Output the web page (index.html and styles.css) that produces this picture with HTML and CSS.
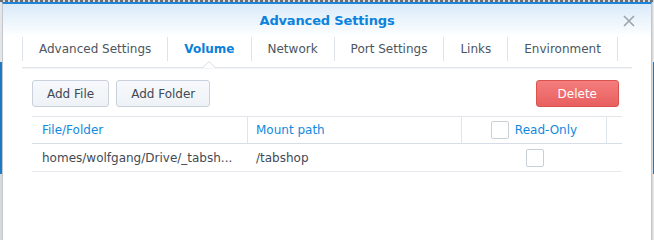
FILE: index.html
```html
<!DOCTYPE html>
<html lang="en">
<head>
    <meta charset="UTF-8">
    <meta name="viewport" content="width=device-width, initial-scale=1.0">
    <title>Advanced Settings</title>
    <link rel="stylesheet" href="styles.css">
</head>
<body>
    <div class="desk">
        <div class="top-strip"></div>
        <div class="desk-row">
            <div class="edge edge-left"></div>

            <div class="window">
                <!-- Window title bar -->
                <div class="window-head">
                    <span></span>
                    <h1 class="window-title">Advanced Settings</h1>
                    <button class="close-btn" aria-label="Close">
                        <svg width="12" height="12" viewBox="0 0 12 12">
                            <path d="M1 1 L11 11 M11 1 L1 11" stroke="#9ba4ad" stroke-width="1.6" fill="none"/>
                        </svg>
                    </button>
                </div>

                <div class="window-body">
                    <!-- Tabs -->
                    <ul class="tabs">
                        <li class="tab">Advanced Settings</li>
                        <li class="tab active">Volume</li>
                        <li class="tab">Network</li>
                        <li class="tab">Port Settings</li>
                        <li class="tab">Links</li>
                        <li class="tab">Environment</li>
                    </ul>

                    <div class="panel">
                        <div class="toolbar">
                            <button class="btn">Add File</button>
                            <button class="btn">Add Folder</button>
                            <button class="btn btn-danger">Delete</button>
                        </div>

                        <!-- Volume grid -->
                        <div class="grid">
                            <div class="grid-head">
                                <div class="cell">File/Folder</div>
                                <div class="cell">Mount path</div>
                                <div class="cell cell-center">
                                    <span class="checkbox"></span>
                                    <span>Read-Only</span>
                                </div>
                                <div class="cell cell-last"></div>
                            </div>
                            <div class="grid-row">
                                <div class="cell">homes/wolfgang/Drive/_tabsh...</div>
                                <div class="cell">/tabshop</div>
                                <div class="cell cell-center">
                                    <span class="checkbox"></span>
                                </div>
                                <div class="cell cell-last"></div>
                            </div>
                        </div>
                    </div>
                </div>
            </div>

            <div class="edge edge-right"></div>
        </div>
    </div>
</body>
</html>
```

FILE: styles.css
```css
/* Base */
* {
    box-sizing: border-box;
    margin: 0;
    padding: 0;
}

body {
    font-family: 'DejaVu Sans', Verdana, sans-serif;
    font-size: 12px;
    color: #3f4a55;
    background: #f4f4f4;
    width: 654px;
    height: 240px;
    overflow: hidden;
}

/* Desktop behind the window */
.desk {
    display: flex;
    flex-direction: column;
    height: 240px;
}

.top-strip {
    height: 2px;
    background: repeating-linear-gradient(90deg, #6b6f74 0 3px, #d9dadc 3px 5px);
}

.desk-row {
    display: flex;
    flex: 1;
}

.edge {
    width: 2px;
    flex-shrink: 0;
}

.edge-left {
    background: linear-gradient(to bottom, #e3e5e8 0 60px, #1b7bc9 60px 172px, #d6d8db 172px);
}

.edge-right {
    background: linear-gradient(to right, #d8d8d8 0 1px, transparent 1px),
                linear-gradient(to bottom, #e8e8e8 0 60px, #1b7bc9 60px 172px, #e8e8e8 172px);
}

/* Window */
.window {
    flex: 1;
    min-width: 0;
    background: #ffffff;
    border-top: 2px solid #1d84d8;
    border-left: 1px solid #c3c7cc;
    border-right: 1px solid #c3c7cc;
}

.window-head {
    height: 33px;
    display: grid;
    grid-template-columns: 1fr auto 1fr;
    align-items: center;
    background: linear-gradient(to bottom, #d9eaf9, #ffffff);
}

.window-title {
    font-size: 13px;
    font-weight: bold;
    color: #0b83dc;
    letter-spacing: -0.15px;
}

.close-btn {
    justify-self: end;
    margin-right: 16px;
    background: transparent;
    border: none;
    display: flex;
}

.window-body {
    padding: 0 19px;
}

/* Tabs */
.tabs {
    list-style: none;
    display: flex;
    padding-bottom: 6px;
    border-bottom: 1px solid #e1e4e8;
    box-shadow: 0 1px 0 #f3f4f6;
}

.tab {
    height: 24px;
    line-height: 24px;
    padding: 0 16px;
    border-left: 1px solid #dde3e9;
    color: #4b5662;
    white-space: nowrap;
}

.tab:last-child {
    border-right: 1px solid #dde3e9;
}

.tab.active {
    position: relative;
    font-weight: bold;
    color: #0b80da;
}

.tab.active::before,
.tab.active::after {
    content: "";
    position: absolute;
    left: 50%;
    width: 0;
    height: 0;
    border-style: solid;
    border-color: transparent;
}

.tab.active::before {
    bottom: -7px;
    margin-left: -7px;
    border-width: 0 7px 7px 7px;
    border-bottom-color: #d6dbe1;
}

.tab.active::after {
    bottom: -7px;
    margin-left: -6px;
    border-width: 0 6px 6px 6px;
    border-bottom-color: #ffffff;
}

/* Panel */
.panel {
    padding: 12px 10px 0;
}

.toolbar {
    display: flex;
    gap: 7px;
}

.btn {
    height: 27px;
    padding: 0 14px;
    font-family: inherit;
    font-size: 12px;
    color: #3f4a55;
    background: linear-gradient(to bottom, #f7f9fc, #eef2f6);
    border: 1px solid #c9d2dc;
    border-radius: 3px;
}

.btn-danger {
    margin-left: auto;
    margin-right: 3px;
    padding: 0 21px;
    color: #ffffff;
    background: linear-gradient(to bottom, #f57d7d, #e86060);
    border-color: #d9534f;
}

/* Grid */
.grid {
    margin-top: 9px;
}

.grid-head,
.grid-row {
    display: grid;
    grid-template-columns: 216px 214px 145px 1fr;
}

.grid-head {
    border-top: 1px solid #e2e6ea;
    border-bottom: 1px solid #d6dde6;
    color: #1189e0;
}

.grid-head .cell {
    height: 26px;
    border-right: 1px solid #dfe5ec;
}

.grid-head .cell-last {
    border-right: none;
}

.grid-row {
    border-bottom: 1px solid #e6e9ed;
}

.grid-row .cell {
    height: 27px;
}

.cell {
    display: flex;
    align-items: center;
    padding: 0 10px;
    white-space: nowrap;
    overflow: hidden;
    text-overflow: ellipsis;
}

.grid-head .cell:nth-child(2),
.grid-row .cell:nth-child(2) {
    padding-left: 8px;
}

.cell-center {
    justify-content: center;
    gap: 6px;
}

.checkbox {
    width: 18px;
    height: 18px;
    border: 1px solid #c8cfd7;
    border-radius: 2px;
    background: #ffffff;
}
```
